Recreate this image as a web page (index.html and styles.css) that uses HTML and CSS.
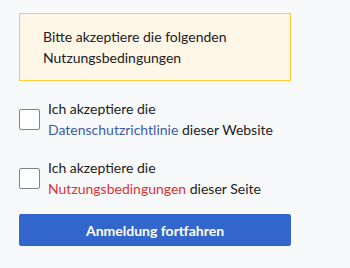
FILE: index.html
```html
<!DOCTYPE html>
<html lang="de">
<head>
    <meta charset="UTF-8">
    <title>Nutzungsbedingungen</title>
    <link rel="stylesheet" href="styles.css">
</head>
<body>
    <div class="consent-form">
        <div class="warning-box">
            Bitte akzeptiere die folgenden Nutzungsbedingungen
        </div>

        <label class="check-row">
            <span class="checkbox"></span>
            <span class="check-text">Ich akzeptiere die<br><a href="#" class="link">Datenschutzrichtlinie</a> dieser Website</span>
        </label>

        <label class="check-row">
            <span class="checkbox"></span>
            <span class="check-text">Ich akzeptiere die<br><a href="#" class="link new">Nutzungsbedingungen</a> dieser Seite</span>
        </label>

        <button class="submit-button">Anmeldung fortfahren</button>
    </div>
</body>
</html>
```

FILE: styles.css
```css
body {
    margin: 0;
    padding: 13px 19px;
    background-color: #f8f9fa;
    font-family: Lato, "Liberation Sans", sans-serif;
    font-size: 14px;
    line-height: 21px;
    color: #202122;
}

.consent-form {
    width: 272px;
    display: flex;
    flex-direction: column;
}

.warning-box {
    background-color: #fef6e7;
    border: 1px solid #fc3;
    padding: 12px 24px 12px 23px;
    margin-bottom: 17px;
}

.check-row {
    display: flex;
    align-items: center;
    gap: 8px;
    margin-bottom: 17px;
}

.checkbox {
    flex: none;
    width: 19px;
    height: 19px;
    border: 1px solid #808488;
    border-radius: 2px;
    background-color: #fff;
}

.link {
    color: #3a5ba8;
    text-decoration: none;
}

.link.new {
    color: #d33;
}

.submit-button {
    height: 32px;
    margin-top: -2px;
    border: 1px solid #3366cc;
    border-radius: 2px;
    background-color: #3366cc;
    color: #fff;
    font-family: Lato, "Liberation Sans", sans-serif;
    font-size: 14px;
    font-weight: bold;
}
```
